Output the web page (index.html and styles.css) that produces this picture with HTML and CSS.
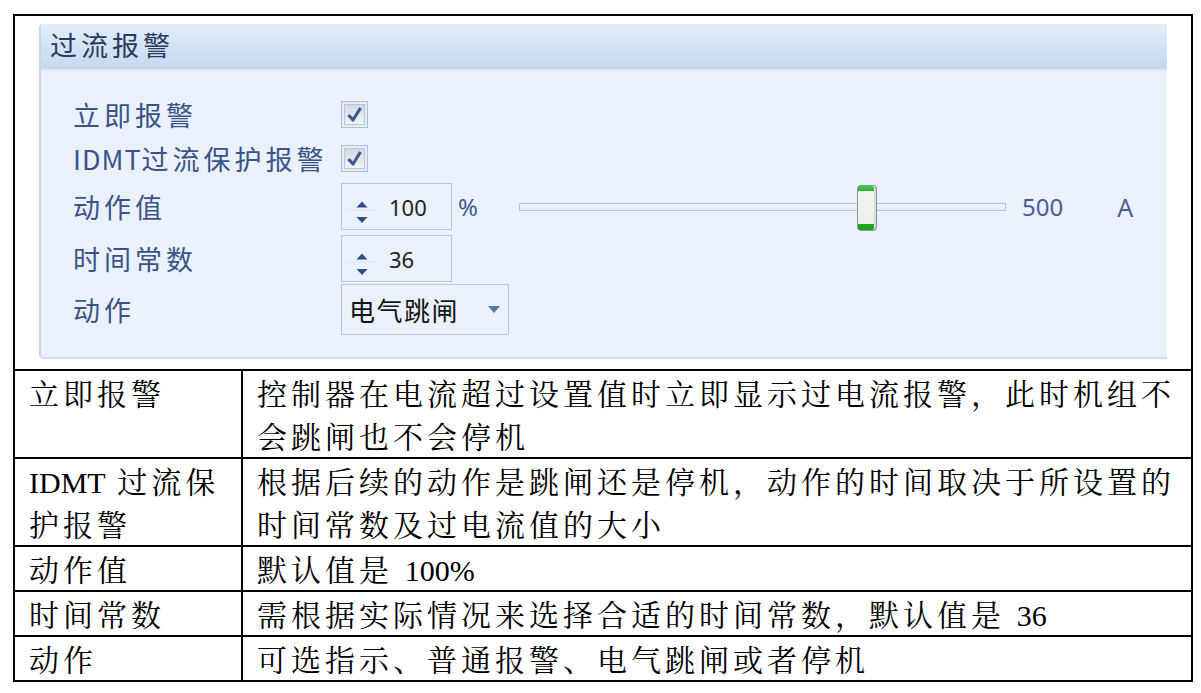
FILE: index.html
```html
<!DOCTYPE html>
<html lang="zh-CN">
<head>
    <meta charset="UTF-8">
    <meta name="viewport" content="width=device-width, initial-scale=1.0">
    <title>过流报警</title>
    <link rel="stylesheet" href="styles.css">
</head>
<body>
    <table class="spec">
        <colgroup>
            <col class="col-name">
            <col class="col-desc">
        </colgroup>
        <tr>
            <td colspan="2" class="shot-cell">
                <div class="panel">
                    <div class="panel-head">过流报警</div>
                    <div class="panel-body">
                        <div class="field field-a">
                            <span class="label">立即报警</span>
                            <span class="check">
                                <span class="check-box">
                                    <svg width="19" height="19" viewBox="0 0 19 19"><path d="M3.5 10 L8 15 L15.5 3" fill="none" stroke="#3a5c95" stroke-width="3.2" stroke-linejoin="round"/></svg>
                                </span>
                            </span>
                        </div>
                        <div class="field field-b">
                            <span class="label"><span class="latin">IDMT</span>过流保护报警</span>
                            <span class="check">
                                <span class="check-box">
                                    <svg width="19" height="19" viewBox="0 0 19 19"><path d="M3.5 10 L8 15 L15.5 3" fill="none" stroke="#3a5c95" stroke-width="3.2" stroke-linejoin="round"/></svg>
                                </span>
                            </span>
                        </div>
                        <div class="field field-c">
                            <span class="label">动作值</span>
                            <span class="spin">
                                <svg class="spin-arrows" width="36" height="45" viewBox="0 0 36 45">
                                    <line x1="3" y1="26" x2="36" y2="26" stroke="#dde6f1" stroke-width="1"/>
                                    <polygon points="14.5,23.5 25.5,23.5 20,17.5" fill="#2d4f86"/>
                                    <polygon points="14.5,33 25.5,33 20,39" fill="#2d4f86"/>
                                </svg>
                                <span class="spin-value">100</span>
                            </span>
                            <span class="unit">%</span>
                            <span class="slider">
                                <span class="slider-track"></span>
                                <span class="slider-thumb"></span>
                            </span>
                            <span class="slider-max">500</span>
                            <span class="amp">A</span>
                        </div>
                        <div class="field field-d">
                            <span class="label">时间常数</span>
                            <span class="spin">
                                <svg class="spin-arrows" width="36" height="45" viewBox="0 0 36 45">
                                    <line x1="3" y1="26" x2="36" y2="26" stroke="#dde6f1" stroke-width="1"/>
                                    <polygon points="14.5,23.5 25.5,23.5 20,17.5" fill="#2d4f86"/>
                                    <polygon points="14.5,33 25.5,33 20,39" fill="#2d4f86"/>
                                </svg>
                                <span class="spin-value">36</span>
                            </span>
                        </div>
                        <div class="field field-e">
                            <span class="label">动作</span>
                            <span class="combo">
                                <span class="combo-text">电气跳闸</span>
                                <svg class="combo-arrow" width="12" height="7" viewBox="0 0 12 7"><polygon points="0,0 12,0 6,7" fill="#5a79a8"/></svg>
                            </span>
                        </div>
                    </div>
                </div>
            </td>
        </tr>
        <tr>
            <td>立即报警</td>
            <td>控制器在电流超过设置值时立即显示过电流报警，此时机组不<br>会跳闸也不会停机</td>
        </tr>
        <tr>
            <td><span class="num">IDMT</span> 过流保<br>护报警</td>
            <td>根据后续的动作是跳闸还是停机，动作的时间取决于所设置的<br>时间常数及过电流值的大小</td>
        </tr>
        <tr>
            <td>动作值</td>
            <td>默认值是 <span class="num">100%</span></td>
        </tr>
        <tr>
            <td>时间常数</td>
            <td>需根据实际情况来选择合适的时间常数，默认值是 <span class="num">36</span></td>
        </tr>
        <tr>
            <td>动作</td>
            <td>可选指示、普通报警、电气跳闸或者停机</td>
        </tr>
    </table>
</body>
</html>
```

FILE: styles.css
```css
body {
    margin: 0;
    background-color: #ffffff;
}

/* description table */
.spec {
    border-collapse: collapse;
    table-layout: fixed;
    width: 1180px;
    margin: 14px 0 0 13px;
    font-family: "Noto Serif CJK SC", "Noto Sans CJK SC", serif;
    font-size: 30px;
    line-height: 43px;
    color: #000000;
}
.spec td {
    border: 2px solid #000000;
    padding: 0 0 0 14px;
    vertical-align: top;
    letter-spacing: 4px;
    white-space: nowrap;
}
.col-name {
    width: 228px;
}
.spec .num {
    font-family: "Liberation Serif", serif;
    letter-spacing: 0;
    line-height: 1;
}
.spec td.shot-cell {
    padding: 8px 24px 10px 24px;
    letter-spacing: 0;
    line-height: normal;
}

/* settings panel */
.panel {
    height: 335px;
    box-sizing: border-box;
    border-left: 2px solid #c9d5e3;
    border-bottom: 2px solid #d3dde9;
    border-radius: 4px 0 0 5px;
    background-color: #eaf1fb;
    font-family: "Noto Sans CJK SC", sans-serif;
    overflow: hidden;
}
.panel-head {
    height: 45px;
    line-height: 42px;
    padding-left: 9px;
    font-size: 27px;
    letter-spacing: 4px;
    color: #283c5e;
    background: linear-gradient(#e3edf9, #c4d9f0);
    border-bottom: 1px solid #d8e5f4;
}
.panel-body {
    display: flex;
    flex-direction: column;
    padding: 22px 0 0 32px;
}
.field {
    display: flex;
    align-items: center;
}
.field-a { height: 44px; }
.field-b { height: 45px; }
.field-c { height: 47px; margin-top: 2px; }
.field-d { height: 47px; margin-top: 5px; }
.field-e { height: 51px; margin-top: 2px; }

.label {
    width: 268px;
    flex-shrink: 0;
    font-size: 27px;
    letter-spacing: 4px;
    color: #3a5488;
    white-space: nowrap;
}
.label .latin {
    letter-spacing: 1px;
}

.check {
    width: 27px;
    height: 27px;
    box-sizing: border-box;
    border: 1px solid #a9bfdb;
    padding: 2px;
    background-color: #e4edf8;
}
.check-box {
    display: flex;
    align-items: center;
    justify-content: center;
    width: 100%;
    height: 100%;
    box-sizing: border-box;
    border: 1px solid #bcc6d2;
    background: linear-gradient(#d4d8de, #f3f4f5);
}

.spin {
    display: flex;
    align-items: center;
    width: 111px;
    height: 47px;
    box-sizing: border-box;
    border: 1px solid #b5c8df;
}
.spin-value {
    margin-left: 11px;
    font-family: "Noto Sans", sans-serif;
    font-size: 22px;
    color: #222222;
}
.unit {
    width: 61px;
    margin-left: 6px;
    font-family: "Noto Sans", sans-serif;
    font-size: 24px;
    color: #3d5a90;
}

.slider {
    position: relative;
    width: 487px;
    height: 47px;
    display: flex;
    align-items: center;
}
.slider-track {
    width: 100%;
    height: 8px;
    box-sizing: border-box;
    border: 1px solid #b2c5de;
    background: linear-gradient(#f2f6fb, #e2eaf5);
}
.slider-thumb {
    position: absolute;
    left: 338px;
    top: 2px;
    width: 20px;
    height: 46px;
    box-sizing: border-box;
    border: 1px solid #8796a6;
    border-radius: 4px;
    background: linear-gradient(#3fcf3f 0, #2bb52b 5px, #f3f3f0 5px, #eeeeea calc(100% - 6px), #24a824 calc(100% - 6px), #1f9a1f 100%);
    box-shadow: inset -2px 0 0 #d9dbd8;
}
.slider-max {
    margin-left: 16px;
    font-family: "Noto Sans", sans-serif;
    font-size: 24px;
    color: #485e94;
}
.amp {
    margin-left: 54px;
    font-family: "Noto Sans", sans-serif;
    font-size: 25px;
    color: #485e94;
}

.combo {
    display: flex;
    align-items: center;
    width: 168px;
    height: 51px;
    box-sizing: border-box;
    border: 1px solid #b5c8df;
}
.combo-text {
    padding-left: 7px;
    font-size: 26px;
    letter-spacing: 1.5px;
    color: #151515;
}
.combo-arrow {
    margin-left: auto;
    margin-right: 8px;
}
```
